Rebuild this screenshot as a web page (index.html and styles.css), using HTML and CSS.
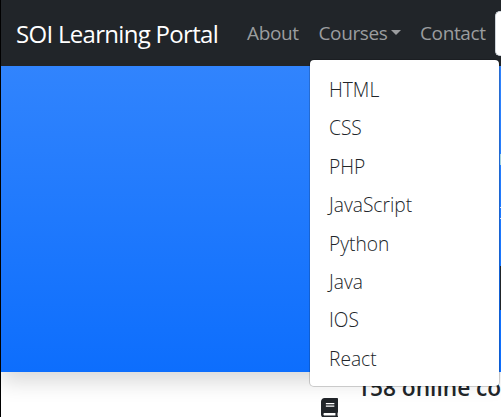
FILE: index.html
```html
<!DOCTYPE html>
<html lang="en">
<head>
<meta charset="utf-8">
<title>SOI Learning Portal</title>
<link rel="stylesheet" href="styles.css">
</head>
<body>
<nav class="navbar">
  <a class="brand">SOI Learning Portal</a>
  <a class="link about">About</a>
  <div class="dropdown">
    <a class="link courses">Courses</a><i class="caret"></i>
    <ul class="menu">
      <li>HTML</li><li>CSS</li><li>PHP</li><li>JavaScript</li><li>Python</li><li>Java</li><li>IOS</li><li>React</li>
    </ul>
  </div>
  <a class="link contact">Contact</a>
  <div class="search"></div>
</nav>
<section class="hero"><div class="edge"></div></section>
<section class="features">
  <svg class="book" viewBox="0 0 448 512" preserveAspectRatio="none"><path fill="currentColor" d="M448 360V24c0-13.300-10.700-24-24-24H96C43 0 0 43 0 96v320c0 53 43 96 96 96h328c13.300 0 24-10.700 24-24v-16c0-7.500-3.500-14.300-8.900-18.700-4.200-15.400-4.200-59.300 0-74.700 5.400-4.300 8.900-11.100 8.900-18.600zM128 134c0-3.300 2.700-6 6-6h212c3.300 0 6 2.700 6 6v20c0 3.300-2.700 6-6 6H134c-3.300 0-6-2.700-6-6v-20zm0 64c0-3.300 2.700-6 6-6h212c3.300 0 6 2.700 6 6v20c0 3.300-2.700 6-6 6H134c-3.300 0-6-2.700-6-6v-20zm253.400 250H96c-17.700 0-32-14.300-32-32 0-17.600 14.400-32 32-32h285.400c-1.900 17.100-1.900 46.900 0 64z"/></svg>
  <div class="copy"><h2>158 online co</h2><p>Enjoy a variety</p></div>
</section>
</body>
</html>
```
FILE: styles.css
```css
* { box-sizing: border-box; }
body {
  margin: 0;
  height: 417px;
  overflow: hidden;
  border-left: 1px solid #000;
  background: #fff;
  color: #212529;
  font: 300 19.2px/28.8px "Open Sans", "Noto Sans", sans-serif;
}
.navbar {
  position: relative;
  z-index: 2;
  display: flex;
  align-items: center;
  height: 66px;
  padding-left: 15px;
  background: #212529;
  white-space: nowrap;
}
.brand {
  width: 231px;
  padding-top: 3px;
  font-size: 24px;
  font-weight: 400;
  letter-spacing: -0.7px;
  color: #fff;
}
.link { padding-top: 1px; color: #9b9d9f; font-size: 19px; font-weight: 400; letter-spacing: -0.38px; }
.about { width: 72px; }
.dropdown {
  position: relative;
  display: flex;
  align-items: center;
  width: 101px;
  flex: none;
}
.courses { width: 67px; margin-left: -0.500px; }
.caret {
  margin-left: 5px;
  border: 5.500px solid transparent;
  border-top-color: #9b9d9f;
  border-bottom: 0;
}
.contact { width: 75px; }
.brand, .link, .search { flex: none; }
.search {
  width: 6px;
  height: 45px;
  background: #fff;
  border: 1px solid #ced4da;
  border-right: 0;
  border-radius: 5px 0 0 5px;
}
.menu {
  position: absolute;
  top: 41px;
  left: -10px;
  width: 191px;
  height: 328px;
  margin: 0;
  padding: 10px 0 9px 19px;
  list-style: none;
  background: #fff;
  background-clip: padding-box;
  border: 1px solid rgba(0, 0, 0, .17);
  border-radius: 5px;
}
.menu li { height: 38.400px; padding-top: 6px; }
.hero {
  position: relative;
  z-index: 1;
  display: flex;
  justify-content: flex-end;
  height: 306px;
  background: linear-gradient(#3184fd, #0d6efd);
  box-shadow: 0 10px 20px rgba(0, 0, 0, .15);
}
.edge {
  width: 1px;
  background: linear-gradient(transparent 88px, #a5d3dd 88px 99px, transparent 99px 141px, #d9e5f5 141px 142px, transparent 142px 152px, #d9e5f5 152px 153px, transparent 153px 200px, #212529 200px 244px, transparent 244px);
}
.features { display: flex; padding-left: 320px; height: 45px; overflow: hidden; }
.book { width: 17px; height: 20px; margin-top: 26px; flex: none; }
.copy { margin-left: 19px; white-space: nowrap; }
h2 { margin: 2px 0 0; font-size: 22.700px; line-height: 28px; font-weight: 600; }
p { margin: 9px 0 0; font-size: 19.200px; line-height: 28px; }
```
